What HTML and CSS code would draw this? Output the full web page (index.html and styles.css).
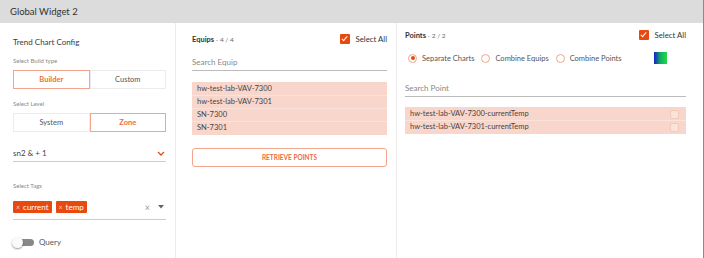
FILE: index.html
```html
<!doctype html>
<html>

<head>
    <title>Global Widget 2</title>
    <link rel="stylesheet" href="styles.css">
</head>

<body>
    <div class="Widget">
        <div class="WidgetHeader">Global Widget 2</div>
        <div class="WidgetBody">
            <!-- left: config -->
            <div class="Col ColConfig">
                <div class="ConfigTitle">Trend Chart Config</div>
                <div class="FieldLabel">Select Build type</div>
                <div class="Toggle">
                    <button class="ToggleBtn active">Builder</button>
                    <button class="ToggleBtn">Custom</button>
                </div>
                <div class="FieldLabel LevelLabel">Select Level</div>
                <div class="Toggle">
                    <button class="ToggleBtn">System</button>
                    <button class="ToggleBtn active">Zone</button>
                </div>
                <div class="Dropdown">
                    <span>sn2 &amp; + 1</span>
                    <svg class="Caret" width="8" height="5" viewBox="0 0 8 5">
                        <path d="M1 1 L4 4 L7 1" fill="none" stroke="#e8490f" stroke-width="1.3" />
                    </svg>
                </div>
                <div class="FieldLabel TagsLabel">Select Tags</div>
                <div class="Tags">
                    <span class="Chip"><span class="ChipX">&times;</span>current</span>
                    <span class="Chip"><span class="ChipX">&times;</span>temp</span>
                    <span class="TagsClear">&times;</span>
                    <svg class="TagsCaret" width="6" height="4" viewBox="0 0 6 4">
                        <path d="M0 0 L6 0 L3 3.5 Z" fill="#666" />
                    </svg>
                </div>
                <div class="Switch">
                    <span class="SwitchTrack"><span class="SwitchKnob"></span></span>
                    <span>Query</span>
                </div>
            </div>

            <!-- middle: equips -->
            <div class="Col ColEquips">
                <div class="SectionHead">
                    <div class="SectionTitle">Equips<span class="Count"> - 4 / 4</span></div>
                    <label class="SelectAll"><span class="Check"></span>Select All</label>
                </div>
                <div class="Search">Search Equip</div>
                <div class="List">
                    <div class="ListRow">hw-test-lab-VAV-7300</div>
                    <div class="ListRow">hw-test-lab-VAV-7301</div>
                    <div class="ListRow">SN-7300</div>
                    <div class="ListRow">SN-7301</div>
                </div>
                <button class="Retrieve">RETRIEVE POINTS</button>
            </div>

            <!-- right: points -->
            <div class="Col ColPoints">
                <div class="SectionHead">
                    <div class="SectionTitle">Points<span class="Count"> - 2 / 2</span></div>
                    <label class="SelectAll"><span class="Check"></span>Select All</label>
                </div>
                <div class="Radios">
                    <label class="Radio"><span class="RadioDot checked"></span>Separate Charts</label>
                    <label class="Radio"><span class="RadioDot"></span>Combine Equips</label>
                    <label class="Radio"><span class="RadioDot"></span>Combine Points</label>
                    <span class="Swatch"></span>
                </div>
                <div class="Search SearchPoint">Search Point</div>
                <div class="List PointList">
                    <div class="ListRow PointRow">hw-test-lab-VAV-7300-currentTemp<span class="RowIcon"></span></div>
                    <div class="ListRow PointRow">hw-test-lab-VAV-7301-currentTemp<span class="RowIcon"></span></div>
                </div>
            </div>
        </div>
    </div>
</body>

</html>
```

FILE: styles.css
```css
html,
body {
    margin: 0;
    background: #fff;
}

.Widget {
    width: 703px;
    height: 258px;
    border-right: 1px solid #8a8a8a;
    font-family: Lato, "Open Sans", sans-serif;
    color: #333;
    overflow: hidden;
}

.WidgetHeader {
    height: 23px;
    line-height: 23px;
    background: #dcdcdc;
    padding-left: 10px;
    font-size: 9.5px;
    color: #333;
}

.WidgetBody {
    display: flex;
    height: 235px;
}

.Col {
    box-sizing: border-box;
}

.ColConfig {
    width: 176px;
    padding: 13px 9px 0 13px;
    border-right: 1px solid #ececec;
}

.ColEquips {
    width: 221px;
    padding: 9px 9px 0 16px;
    border-right: 1px solid #ececec;
}

.ColPoints {
    flex: 1;
    padding: 5px 17px 0 8px;
}

.ConfigTitle {
    font-size: 8px;
    line-height: 12px;
    color: #3a3a3a;
}

.FieldLabel {
    font-size: 6px;
    line-height: 8px;
    color: #8a8a8a;
    margin: 9px 0 5px;
}

.LevelLabel {
    margin-top: 11px;
}

.Toggle {
    display: flex;
    height: 19px;
}

.ToggleBtn {
    flex: 1;
    border: 1px solid #ececec;
    background: #fff;
    font-family: inherit;
    font-size: 7.5px;
    color: #555;
    padding: 0;
}

.ToggleBtn.active {
    border-color: #f2a58a;
    color: #ec6b3f;
    font-weight: 700;
}

.Dropdown {
    display: flex;
    justify-content: space-between;
    align-items: center;
    margin-top: 16px;
    padding-bottom: 3px;
    border-bottom: 1px solid #ccc;
    font-size: 8px;
    color: #444;
}

.Caret {
    margin-right: 1px;
}

.TagsLabel {
    margin-top: 20px;
    margin-bottom: 11px;
}

.Tags {
    display: flex;
    align-items: center;
    gap: 4px;
    padding-bottom: 6px;
    border-bottom: 1px solid #ccc;
}

.Chip {
    background: #e8490f;
    color: #fff;
    font-size: 8px;
    height: 12px;
    line-height: 12px;
    padding: 0 3px;
    border-radius: 1px;
}

.ChipX {
    font-size: 7px;
    margin-right: 3px;
    color: #fbd0c0;
}

.TagsClear {
    margin-left: auto;
    font-size: 9px;
    color: #999;
}

.TagsCaret {
    margin: 0 2px 0 4px;
}

.Switch {
    display: flex;
    align-items: center;
    gap: 5px;
    margin-top: 17px;
    font-size: 8px;
    color: #555;
}

.SwitchTrack {
    position: relative;
    width: 20px;
    height: 7px;
    background: #888;
    border-radius: 4px;
    margin-left: 1px;
}

.SwitchKnob {
    position: absolute;
    left: -2px;
    top: -2px;
    width: 11px;
    height: 11px;
    border-radius: 50%;
    background: #fafafa;
    box-shadow: 0 1px 2px rgba(0, 0, 0, 0.4);
}

.SectionHead {
    display: flex;
    justify-content: space-between;
    align-items: center;
    height: 14px;
}

.SectionTitle {
    font-size: 7.5px;
    font-weight: 700;
    color: #333;
}

.Count {
    font-size: 6.5px;
    font-weight: 400;
    color: #666;
}

.SelectAll {
    display: flex;
    align-items: center;
    gap: 6px;
    font-size: 7.8px;
    color: #333;
}

.Check {
    position: relative;
    width: 10px;
    height: 10px;
    background: #e8490f;
    border-radius: 1px;
}

.Check::after {
    content: "";
    position: absolute;
    left: 3px;
    top: 1px;
    width: 2px;
    height: 5px;
    border: solid #fff;
    border-width: 0 1.2px 1.2px 0;
    transform: rotate(40deg);
}

.Search {
    margin-top: 11px;
    padding-bottom: 3px;
    border-bottom: 1px solid #bbb;
    font-size: 8px;
    color: #888;
}

.List {
    margin-top: 11px;
    background: #f9d6cb;
    padding: 1px 0;
}

.ListRow {
    height: 12px;
    line-height: 12px;
    padding-left: 5px;
    font-size: 7.5px;
    color: #444;
    border-bottom: 1px solid #fbe3db;
}

.ListRow:last-child {
    border-bottom: none;
}

.Retrieve {
    display: block;
    width: 100%;
    height: 19px;
    margin-top: 13px;
    border: 1px solid #f2a58a;
    border-radius: 3px;
    background: #fff;
    font-family: inherit;
    font-size: 6.5px;
    font-weight: 700;
    color: #ec6b3f;
}

.Radios {
    display: flex;
    align-items: center;
    margin-top: 10px;
    padding-left: 3px;
    font-size: 7.5px;
}

.Radio {
    display: flex;
    align-items: center;
    gap: 5px;
    margin-right: 7px;
    color: #555;
}

.RadioDot {
    position: relative;
    width: 7px;
    height: 7px;
    border: 1px solid #f2a58a;
    border-radius: 50%;
}

.RadioDot.checked::after {
    content: "";
    position: absolute;
    left: 1.5px;
    top: 1.5px;
    width: 4px;
    height: 4px;
    border-radius: 50%;
    background: #e8490f;
}

.Swatch {
    width: 13px;
    height: 12px;
    margin-left: 25px;
    background: linear-gradient(to right, #1420c8, #0fb060, #22d84a);
}

.SearchPoint {
    margin-top: 19px;
}

.PointList {
    margin-top: 10px;
}

.PointRow {
    display: flex;
    justify-content: space-between;
    align-items: center;
}

.RowIcon {
    width: 7px;
    height: 7px;
    margin-right: 7px;
    background: #fbe3da;
    border: 1px solid #f0c9bb;
    border-radius: 2px;
}
```
